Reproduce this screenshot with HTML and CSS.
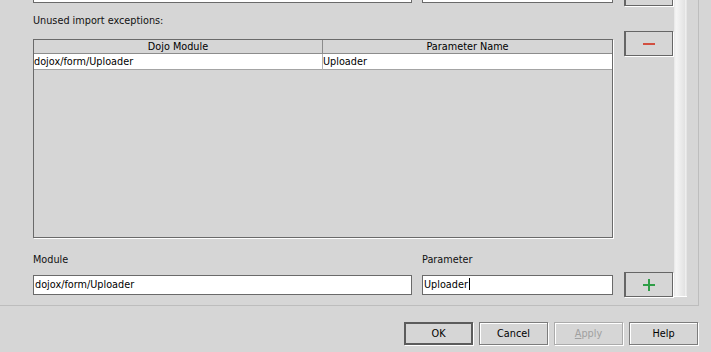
FILE: index.html
```html
<!DOCTYPE html>
<html lang="en">
<head>
    <meta charset="UTF-8">
    <title>Dojo Import Exceptions</title>
    <link rel="stylesheet" href="styles.css">
</head>
<body>
    <div class="panel">
        <div class="main">
            <div class="field-row top-row">
                <div class="field wide"></div>
                <div class="field narrow"></div>
            </div>

            <div class="label section-label">Unused import exceptions:</div>

            <div class="grid">
                <table>
                    <thead>
                        <tr>
                            <th class="col-module">Dojo Module</th>
                            <th>Parameter Name</th>
                        </tr>
                    </thead>
                    <tbody>
                        <tr>
                            <td class="col-module">dojox/form/Uploader</td>
                            <td>Uploader</td>
                        </tr>
                    </tbody>
                </table>
            </div>

            <div class="field-row labels">
                <div class="label wide">Module</div>
                <div class="label narrow">Parameter</div>
            </div>
            <div class="field-row inputs">
                <div class="field wide">dojox/form/Uploader</div>
                <div class="field narrow">Uploader<span class="caret"></span></div>
            </div>
        </div>

        <div class="side">
            <div class="tool-btn top-btn"></div>
            <div class="tool-btn remove-btn">
                <svg width="12" height="2" viewBox="0 0 12 2"><rect width="12" height="2" fill="#d24f40"/></svg>
            </div>
            <div class="tool-btn add-btn">
                <svg width="12" height="12" viewBox="0 0 12 12">
                    <rect x="0" y="5" width="12" height="2" fill="#2f9e47"/>
                    <rect x="5" y="0" width="2" height="12" fill="#2f9e47"/>
                </svg>
            </div>
        </div>

        <div class="scroll"></div>
    </div>

    <div class="footer">
        <button class="btn default">OK</button>
        <button class="btn">Cancel</button>
        <button class="btn disabled"><u>A</u>pply</button>
        <button class="btn">Help</button>
    </div>
</body>
</html>
```

FILE: styles.css
```css
* {
    margin: 0;
    padding: 0;
    box-sizing: border-box;
}

body {
    background: #d6d6d6;
    font-family: "DejaVu Sans", Verdana, sans-serif;
    font-size: 9.7px;
    color: #000;
    width: 711px;
    height: 352px;
    overflow: hidden;
}

.panel {
    display: flex;
    width: 699px;
    height: 306px;
    border-right: 1px solid #bdbdbd;
    border-bottom: 1px solid #bdbdbd;
    overflow: hidden;
}

.main {
    width: 580px;
    margin-left: 33px;
}

.field-row {
    display: flex;
    gap: 10px;
}

.wide {
    width: 379px;
}

.narrow {
    width: 191px;
}

.field {
    height: 20px;
    background: #fff;
    border: 1px solid #6a6a6a;
    padding-left: 1px;
    line-height: 18px;
    white-space: nowrap;
}

.top-row {
    margin-top: -17px;
}

.label {
    line-height: 13px;
    color: #111;
}

.section-label {
    margin-top: 11px;
}

.grid {
    margin-top: 12px;
    height: 199px;
    border: 1px solid #6a6a6a;
    box-shadow: 1px 1px 0 #fff;
}

table {
    width: 100%;
    border-collapse: separate;
    border-spacing: 0;
    table-layout: fixed;
}

th {
    font-weight: normal;
    line-height: 13px;
    border-bottom: 1px solid #8c8c8c;
    text-align: center;
    padding: 0;
}

th.col-module {
    width: 289px;
    border-right: 1px solid #8c8c8c;
}

td {
    background: #fff;
    line-height: 15px;
    border-bottom: 1px solid #a4a4a4;
    padding: 0 0 0 0;
    white-space: nowrap;
}

td.col-module {
    border-right: 1px solid #b4b4b4;
}

.labels {
    margin-top: 15px;
}

.inputs {
    margin-top: 9px;
}

.caret {
    display: inline-block;
    width: 1px;
    height: 12px;
    background: #000;
    vertical-align: -2px;
    margin-left: 1px;
}

.side {
    width: 49px;
    margin-left: 11px;
}

.tool-btn {
    height: 25px;
    border: 1px solid #666;
    border-left-width: 2px;
    box-shadow: 1px 1px 0 #fff;
    display: flex;
    align-items: center;
    justify-content: center;
}

.top-btn {
    margin-top: -19px;
}

.remove-btn {
    margin-top: 25px;
}

.add-btn {
    margin-top: 216px;
}

.scroll {
    width: 13px;
    height: 297px;
    margin-left: 1px;
    background: linear-gradient(to right, #e6e6e6 0, #f6f6f6 2px, #ececec 50%, #e2e2e2 11px, #fbfbfb 12px, #cfcfcf 13px);
    border-bottom: 1px solid #fff;
}

.footer {
    display: flex;
    justify-content: flex-end;
    gap: 6px;
    padding: 16px 13px 0 0;
}

.btn {
    width: 69px;
    height: 23px;
    font-family: "DejaVu Sans", Verdana, sans-serif;
    font-size: 9.7px;
    color: #000;
    background: #d6d6d6;
    border: 1px solid #7c7c7c;
    box-shadow: inset 1px 1px 0 #fff, 1px 1px 0 #fff;
}

.btn.default {
    border: 2px solid #5c5c5c;
    box-shadow: 1px 1px 0 #fff;
}

.btn.disabled {
    color: #a0a0a0;
    border-color: #ababab;
}
```
